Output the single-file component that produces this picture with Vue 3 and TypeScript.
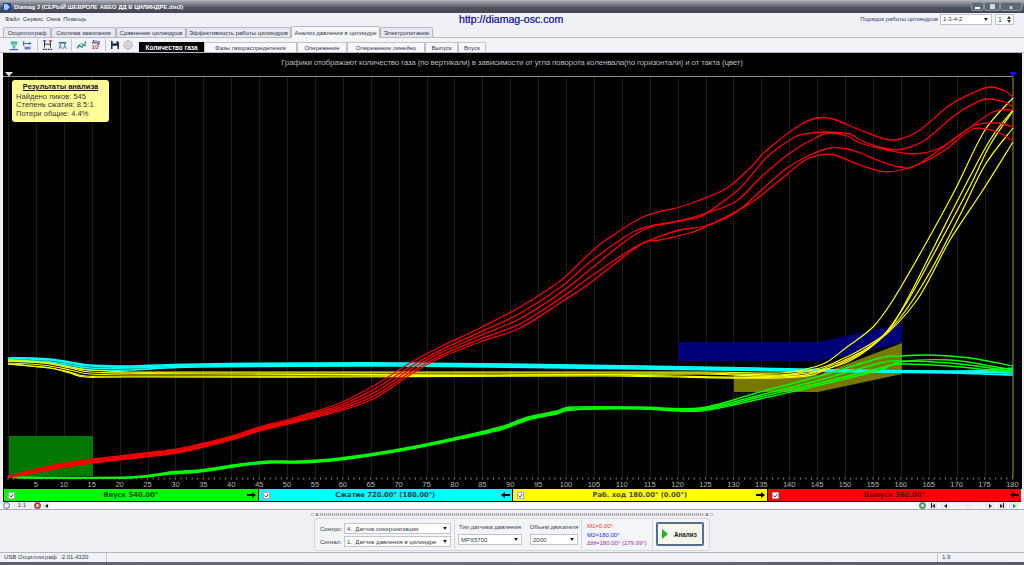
<template>
  <div class="window">
    <div class="titlebar">
      <svg class="app-icon" width="8" height="8" viewBox="0 0 8 8"><rect width="8" height="8" fill="#1b3fa8" /><path d="M1 1h3l3 3-3 3H1z" fill="#9fd0ff" /></svg>
      <span class="title-text">Diamag 2 (СЕРЫЙ ШЕВРОЛЕ АВЕО ДД В ЦИЛИНДРЕ.dm2)</span>
      <div class="win-btns">
        <span class="win-btn w-min"><i class="min-mark"></i></span>
        <span class="win-btn w-max"><i class="max-mark"></i></span>
        <span class="win-btn w-close">x</span>
      </div>
    </div>

    <div class="menubar">
      <div class="menu">
        <span v-for="m in menu" :key="m">{{ m }}</span>
      </div>
      <a class="url">http://diamag-osc.com</a>
      <div class="order">
        <span class="order-label">Порядок работы цилиндров</span>
        <div class="sel order-sel"><span>1-3-4-2</span><i class="caret"></i></div>
        <div class="spin"><span>1</span><span class="spin-arrows"><i class="up"></i><i class="down"></i></span></div>
      </div>
    </div>

    <div class="tabs">
      <div
        v-for="t in tabs"
        :key="t.label"
        class="tab"
        :class="{ active: t.active }"
        :style="{ width: t.width + 'px' }"
      >{{ t.label }}</div>
    </div>

    <div class="toolbar">
      <div class="tools">
        <svg class="tool" width="10" height="11" viewBox="0 0 12 12">
          <path d="M2 2h8M2 4h8" stroke="#18a8a0" stroke-width="1.4" />
          <path d="M3 6h6l-2 2v2H5V8z" fill="#2ec46a" />
          <path d="M1 11h10" stroke="#2340d0" stroke-width="1.2" />
        </svg>
        <svg class="tool" width="9" height="10" viewBox="0 0 12 12">
          <path d="M1 1v6" stroke="#124" stroke-width="1.2" />
          <path d="M2 4h7" stroke="#0a6a88" stroke-width="1.2" />
          <path d="M8 2l3 2-3 2z" fill="#0a6a88" />
          <path d="M2 9h8M2 11h8" stroke="#2340d0" stroke-width="1.2" />
        </svg>
        <i class="tool-sep"></i>
        <svg class="tool" width="11" height="11" viewBox="0 0 13 13">
          <path d="M3 1v8M10 1v8M3 5h7" stroke="#223" stroke-width="1.1" />
          <path d="M1 1h4" stroke="#1a3bd0" stroke-width="1.3" />
          <path d="M8 1h4" stroke="#d22" stroke-width="1.3" />
          <path d="M1 11h11" stroke="#335" stroke-width="1.6" stroke-dasharray="2 1" />
        </svg>
        <svg class="tool" width="9" height="10" viewBox="0 0 12 12">
          <path d="M1 2h10v2H1z" fill="#117a7a" />
          <path d="M3 4v3M9 4v3" stroke="#234" />
          <path d="M1 11l2-4 2 4M7 11l2-4 2 4" fill="none" stroke="#2340d0" />
        </svg>
        <i class="tool-sep"></i>
        <svg class="tool" width="11" height="10" viewBox="0 0 13 12">
          <path d="M1 10l3-4 3 3 5-7" fill="none" stroke="#109040" stroke-width="1.3" />
          <path d="M2 7l2 1M6 4l2 2M10 7l2-1" stroke="#2340d0" stroke-width="1.2" />
        </svg>
        <span class="tool alg"><b>Alg</b><b class="alg-sub">1/2</b></span>
        <i class="tool-sep"></i>
        <svg class="tool" width="8" height="8" viewBox="0 0 10 10">
          <path d="M0 0h8l2 2v8H0z" fill="#1c2c44" />
          <path d="M2 0h5v3H2z" fill="#dfe4ee" />
          <path d="M2 6h6v4H2z" fill="#fff" />
        </svg>
        <svg class="tool" width="10" height="10" viewBox="0 0 12 12">
          <circle cx="6" cy="6" r="4.6" fill="none" stroke="#b4b4b4" stroke-width="1.4" />
          <path d="M6 0v12M0 6h12M2 2l8 8M10 2l-8 8" stroke="#b4b4b4" stroke-width=".8" />
          <circle cx="6" cy="6" r="1.6" fill="#e8e8ee" stroke="#aaa" stroke-width=".6" />
        </svg>
      </div>
      <div class="subtabs">
        <div
          v-for="s in subtabs"
          :key="s.label"
          class="subtab"
          :class="{ current: s.current }"
          :style="{ width: s.width + 'px' }"
        >{{ s.label }}</div>
      </div>
    </div>

    <div class="plot">
      <svg class="plot-svg" width="1019" height="436" viewBox="3 53 1019 436">
        <line v-for="g in grid" :key="'g' + g" :x1="g" :x2="g" y1="77" y2="478" stroke="#1d1d1d" />
        <line x1="3" x2="1013" y1="76.5" y2="76.5" stroke="#8e8e8e" />
        <line x1="1013" x2="1013" y1="77" y2="478" stroke="#8a8a12" />
        <polygon points="5,72 13,72 9,76.5" fill="#e2e2e2" />
        <polygon points="1009,72 1017,72 1013,76.5" fill="#1010f0" />

        <rect x="9" y="436" width="84" height="40" fill="#007800" />
        <polygon points="678,342 818,342 902,324 902,343 818,361 678,361" fill="#000078" />
        <polygon points="734,374 818,375 902,343 902,374 818,392 734,392" fill="#787800" />

        <path v-for="(d, i) in cyanPaths" :key="'c' + i" :d="d" class="curve wide-curve" stroke="#00ffff" />
        <path v-for="(d, i) in greenPaths" :key="'n' + i" :d="d" class="curve green-curve" stroke="#00ff00" />
        <path v-for="(d, i) in yellowPaths" :key="'y' + i" :d="d" class="curve yellow-curve" stroke="#ffff00" />
        <path v-for="(d, i) in redPaths" :key="'r' + i" :d="d" class="curve" stroke="#ff0000" />

        <line v-for="t in ticks" :key="'t' + t" :x1="t" :x2="t" y1="477.5" y2="479.5" stroke="#8a8a8a" />
        <text
          v-for="l in labels"
          :key="'l' + l.deg"
          :x="l.x"
          y="487"
          class="axis-label"
        >{{ l.deg }}</text>
      </svg>
      <div class="plot-title">Графики отображают количество газа (по вертикали) в зависимости от угла поворота коленвала(по горизонтали) и от такта (цвет)</div>
      <div class="result">
        <div class="result-head">Результаты анализа</div>
        <div>Найдено пиков: 545</div>
        <div>Степень сжатия: 8.5:1</div>
        <div>Потери общие: 4.4%</div>
      </div>
    </div>

    <div class="bands">
      <div v-for="b in bands" :key="b.label" class="band" :class="b.cls">
        <span class="check"><svg width="5" height="5" viewBox="0 0 5 5"><path d="M.5 2.5l1.5 1.5L4.5 1" fill="none" stroke="#445" /></svg></span>
        <span class="band-label">{{ b.label }}</span>
        <svg class="arrow" width="9" height="6" viewBox="0 0 9 6">
          <path v-if="b.dir === 'right'" d="M0 2h5V0l4 3-4 3V4H0z" fill="#000" />
          <path v-else d="M9 2H4V0L0 3l4 3V4h5z" fill="#000" />
        </svg>
      </div>
    </div>

    <div class="zoomrow">
      <div class="zoom-left">
        <span class="round minus"></span>
        <span class="ratio">1:1</span>
        <span class="round plus"></span>
        <span class="nav-btn small"><i class="tri-l"></i></span>
      </div>
      <div class="zoom-right">
        <span class="round go"></span>
        <span class="nav-btn"><i class="bar"></i><i class="tri-l"></i></span>
        <span class="nav-btn"><i class="tri-l"></i></span>
        <span class="dots">...</span>
        <span class="nav-btn"><i class="tri-r"></i></span>
        <span class="nav-btn"><i class="tri-r"></i><i class="bar"></i></span>
        <span class="nav-btn"><i class="tri-r green"></i></span>
      </div>
    </div>

    <div class="controls">
      <div class="slider"><i class="tri-d"></i><i class="slider-dots"></i><i class="tri-d"></i></div>
      <div class="box">
        <div class="group sync">
          <div class="sync-row">
            <span class="lbl">Синхро:</span>
            <div class="sel wide"><span>4.&nbsp; Датчик синхронизации</span><i class="caret"></i></div>
          </div>
          <div class="sync-row">
            <span class="lbl">Сигнал:</span>
            <div class="sel wide"><span>1.&nbsp; Датчик давления в цилиндре</span><i class="caret"></i></div>
          </div>
        </div>
        <div class="group sensors">
          <div class="field f-type">
            <span class="lbl">Тип датчика давления</span>
            <div class="sel"><span>MPX5700</span><i class="caret"></i></div>
          </div>
          <div class="field f-vol">
            <span class="lbl">Объем двигателя</span>
            <div class="sel"><span>2000</span><i class="caret"></i></div>
          </div>
        </div>
        <div class="group marks">
          <span class="m1">M1=0.00°</span>
          <span class="m2">M2=180.00°</span>
          <span class="dm">ΔM=180.00° (179.99°)</span>
        </div>
        <div class="group run">
          <button class="analyze"><i class="play"></i><span>Анализ</span></button>
        </div>
      </div>
    </div>

    <div class="status">
      <span class="st-a">USB Осциллограф&nbsp;&nbsp;&nbsp;2.01.4320</span>
      <span class="st-b"></span>
      <span class="st-c">1.9</span>
    </div>
    <div class="taskstrip"></div>
  </div>
</template>

<script setup lang="ts">
type Pt = [number, number]

const menu = ['Файл', 'Сервис', 'Окна', 'Помощь']

const tabs = [
  { label: 'Осциллограф', width: 48 },
  { label: 'Система зажигания', width: 65 },
  { label: 'Сравнение цилиндров', width: 70 },
  { label: 'Эффективность работы цилиндров', width: 105 },
  { label: 'Анализ давления в цилиндре', width: 89, active: true },
  { label: 'Электропитание', width: 53 },
]

const subtabs = [
  { label: 'Количество газа', width: 65, current: true },
  { label: 'Фазы газораспределения', width: 93 },
  { label: 'Опережение', width: 50 },
  { label: 'Опережение линейно', width: 78 },
  { label: 'Выпуск', width: 33 },
  { label: 'Впуск', width: 28 },
]

const bands = [
  { label: 'Впуск 540.00°', cls: 'b-green', dir: 'right' },
  { label: 'Сжатие 720.00° (180.00°)', cls: 'b-cyan', dir: 'left' },
  { label: 'Раб. ход 180.00° (0.00°)', cls: 'b-yellow', dir: 'right' },
  { label: 'Выпуск 360.00°', cls: 'b-red', dir: 'left' },
]

const degX = (deg: number) => 8 + deg * 5.58

const grid = Array.from({ length: 37 }, (_, i) => Math.round(degX(i * 5)) + 0.5)
const ticks = Array.from({ length: 181 }, (_, i) => degX(i))
const labels = Array.from({ length: 36 }, (_, i) => ({ deg: (i + 1) * 5, x: degX((i + 1) * 5) }))

// catmull-rom through the points, curves look like the scope's smoothed traces
function smooth(p: Pt[]): string {
  let d = `M${p[0][0]} ${p[0][1]}`
  for (let i = 0; i < p.length - 1; i++) {
    const p0 = p[i - 1] || p[i]
    const p1 = p[i]
    const p2 = p[i + 1]
    const p3 = p[i + 2] || p2
    const c1x = p1[0] + (p2[0] - p0[0]) / 6
    const c1y = p1[1] + (p2[1] - p0[1]) / 6
    const c2x = p2[0] - (p3[0] - p1[0]) / 6
    const c2y = p2[1] - (p3[1] - p1[1]) / 6
    d += `C${c1x.toFixed(1)} ${c1y.toFixed(1)} ${c2x.toFixed(1)} ${c2y.toFixed(1)} ${p2[0]} ${p2[1]}`
  }
  return d
}

// the early part of a family runs as a tight bundle, so it is interpolated
function bundle(xs: number[], hi: number[], lo: number[], t: number): Pt[] {
  return xs.map((x, i) => [x, +(hi[i] + (lo[i] - hi[i]) * t).toFixed(1)] as Pt)
}

const redX = [8, 60, 93, 170, 200, 235, 256, 300, 340, 375, 410, 440, 480, 520, 560, 590]
const redHi = [476, 464, 459, 450, 444, 435, 428, 416, 403, 385, 363, 347, 328, 307, 281, 253]
const redLo = [478, 468, 463, 454, 448, 439, 432, 421, 411, 398, 375, 358, 342, 328, 303, 283]

const redTails: { t: number; pts: Pt[] }[] = [
  {
    t: 0,
    pts: [[606, 240], [643, 217], [680, 207], [700, 200], [727, 188], [750, 168], [767, 150], [800, 125], [817, 118], [833, 119], [860, 130], [885, 139], [900, 139], [920, 130], [950, 105], [975, 92], [990, 87], [1005, 91], [1013, 97]],
  },
  {
    t: 0.3,
    pts: [[620, 240], [635, 231], [655, 225], [690, 219], [705, 214], [740, 188], [767, 157], [793, 138], [805, 134], [825, 132], [850, 134], [860, 140], [883, 148], [903, 149], [925, 140], [955, 115], [975, 103], [987, 99], [1005, 102], [1013, 107]],
  },
  {
    t: 0.55,
    pts: [[627, 240], [650, 227], [670, 223], [700, 215], [735, 202], [760, 178], [790, 153], [817, 137], [830, 133], [847, 136], [860, 143], [887, 150], [913, 154], [940, 148], [973, 126], [997, 123], [1013, 127]],
  },
  {
    t: 0.8,
    pts: [[630, 250], [650, 240], [680, 230], [705, 226], [735, 213], [767, 185], [787, 168], [810, 155], [830, 148], [847, 149], [860, 153], [880, 161], [900, 167], [917, 165], [957, 137], [993, 112], [1013, 110]],
  },
  {
    t: 1,
    pts: [[640, 245], [660, 240], [690, 233], [705, 227], [735, 212], [755, 200], [780, 180], [805, 160], [820, 155], [835, 155], [860, 165], [887, 172], [917, 165], [945, 150], [973, 129], [997, 132], [1013, 141]],
  },
]

const redPaths = redTails.map(c => {
  const head = bundle(redX, redHi, redLo, c.t).filter(p => p[0] < c.pts[0][0] - 10)
  return smooth([...head, ...c.pts])
})

const yellowPaths = [
  [[8, 360], [30, 361], [50, 363], [70, 367], [90, 370], [130, 372], [200, 372], [500, 372], [700, 372], [780, 373], [810, 368], [827, 362], [847, 347], [873, 327], [893, 300], [925, 245], [955, 190], [985, 130], [1013, 98]],
  [[8, 361], [30, 362], [50, 364], [70, 368], [90, 372], [130, 373], [200, 373], [500, 373], [700, 373], [780, 375], [820, 368], [840, 360], [860, 350], [887, 332], [907, 300], [935, 245], [963, 190], [990, 140], [1013, 110]],
  [[8, 363], [30, 364], [50, 366], [70, 370], [90, 374], [130, 374], [200, 374], [500, 375], [700, 374], [780, 376], [840, 365], [877, 342], [902, 310], [925, 270], [968, 190], [990, 145], [1013, 111]],
  [[8, 364], [30, 366], [50, 368], [70, 372], [85, 376], [130, 376], [340, 376], [600, 375], [780, 377], [830, 366], [872, 345], [900, 318], [930, 272], [960, 215], [985, 165], [1013, 128]],
  [[8, 364], [30, 366], [50, 368], [70, 373], [85, 377], [130, 377], [340, 377], [600, 376], [780, 378], [830, 368], [877, 342], [917, 300], [950, 240], [983, 190], [1013, 142]],
].map(p => smooth(p as Pt[]))

const cyanPaths = [
  [[8, 358], [30, 358], [50, 359], [70, 362], [90, 365], [130, 366], [200, 364], [400, 363], [640, 366], [800, 369], [950, 372], [1013, 368]],
  [[8, 359], [30, 359], [50, 360], [70, 363], [90, 366], [130, 367], [200, 365], [400, 364], [640, 367], [800, 370], [950, 371], [1013, 371]],
  [[8, 360], [30, 361], [50, 362], [70, 365], [90, 368], [130, 368], [200, 366], [400, 365], [640, 368], [800, 371], [950, 372], [1013, 373]],
  [[8, 361], [30, 362], [50, 363], [70, 367], [90, 370], [130, 370], [200, 367], [400, 366], [640, 369], [800, 371], [950, 373], [1013, 375]],
].map(p => smooth(p as Pt[]))

const greenX = [8, 25, 130, 170, 200, 240, 270, 300, 340, 400, 450, 500, 528, 557, 573, 640]
const greenHi = [476, 477, 477, 472, 470, 464, 461, 461, 458, 449, 439, 427, 417, 411, 407, 407]
const greenLo = [477, 478, 478, 474, 472, 466, 463, 463, 460, 451, 441, 430, 420, 414, 410, 409]

const greenPaths = [
  { t: 0, pts: [[700, 408], [760, 392], [820, 376], [880, 358], [900, 356], [930, 355], [970, 358], [1013, 366]] },
  { t: 0.35, pts: [[700, 409], [760, 395], [820, 380], [880, 363], [900, 361], [950, 363], [990, 368], [1013, 372]] },
  { t: 0.7, pts: [[700, 410], [760, 397], [820, 383], [880, 368], [900, 364], [950, 366], [1000, 371], [1013, 369]] },
  { t: 1, pts: [[700, 411], [760, 399], [820, 385], [880, 370], [900, 362], [950, 360], [990, 366], [1013, 370]] },
].map(c => smooth([...bundle(greenX, greenHi, greenLo, c.t), ...(c.pts as Pt[])]))
</script>

<style>
html,
body {
  margin: 0;
  height: 565px;
  overflow: hidden;
  background: #f0f1f6;
}
</style>

<style scoped>
.window {
  width: 1024px;
  height: 565px;
  display: flex;
  flex-direction: column;
  background: #f0f1f6;
  font-family: 'Liberation Sans', Arial, sans-serif;
  font-size: 6px;
  color: #33384a;
  overflow: hidden;
}

.titlebar {
  height: 13px;
  flex: none;
  display: flex;
  align-items: center;
  padding: 0 2px 0 3px;
  box-sizing: border-box;
  background: linear-gradient(#b5b7bf 0, #8b8d97 3px, #4e505a 8px, #43454f 100%);
  color: #fff;
}
.app-icon {
  margin-right: 3px;
}
.title-text {
  font-weight: bold;
  font-size: 5.9px;
}
.win-btns {
  margin-left: auto;
  display: flex;
  align-self: flex-start;
  padding-top: 2px;
}
.win-btn {
  height: 7px;
  display: flex;
  align-items: center;
  justify-content: center;
  background: #5d6a70;
  border: 1px solid #8a949a;
  border-radius: 2px;
  color: #fff;
  font-size: 6px;
  font-weight: bold;
}
.w-min {
  width: 11px;
}
.w-max {
  width: 14px;
}
.w-close {
  width: 20px;
}
.min-mark {
  width: 5px;
  height: 2px;
  margin-top: 3px;
  background: #fff;
}
.max-mark {
  width: 5px;
  height: 5px;
  background: #d5dadd;
}

.menubar {
  height: 12px;
  flex: none;
  display: flex;
  align-items: center;
  position: relative;
  padding: 0 10px 0 5px;
}
.menu {
  display: flex;
  gap: 3px;
  width: 454px;
}
.url {
  color: #2b2fa0;
  font-size: 10.6px;
  font-weight: 500;
  width: 104px;
  white-space: nowrap;
  text-shadow: 0 0 0.4px #2b2fa0;
}
.order {
  margin-left: auto;
  display: flex;
  align-items: center;
  gap: 2px;
}
.order-label {
  color: #2b3a80;
  white-space: nowrap;
}
.order-sel {
  width: 52px;
}
.spin {
  width: 19px;
  height: 11px;
  margin-left: 1px;
  background: #fff;
  border: 1px solid #c5c5cc;
  box-sizing: border-box;
  display: flex;
  align-items: center;
  justify-content: space-between;
  padding: 0 2px;
  font-size: 7px;
}
.spin-arrows {
  display: flex;
  flex-direction: column;
  gap: 1px;
}
.up,
.down {
  width: 0;
  height: 0;
  border-left: 2px solid transparent;
  border-right: 2px solid transparent;
}
.up {
  border-bottom: 3px solid #333;
}
.down {
  border-top: 3px solid #333;
}

.sel {
  height: 11px;
  background: #fff;
  border: 1px solid #c2c3cb;
  box-sizing: border-box;
  display: flex;
  align-items: center;
  justify-content: space-between;
  padding: 0 3px 0 2px;
  color: #333845;
  white-space: nowrap;
  overflow: hidden;
}
.caret {
  flex: none;
  width: 0;
  height: 0;
  border-left: 2.5px solid transparent;
  border-right: 2.5px solid transparent;
  border-top: 3px solid #222;
}

.tabs {
  height: 13px;
  flex: none;
  display: flex;
  align-items: flex-end;
  padding-left: 3px;
  box-sizing: border-box;
  border-bottom: 1px solid #b9bac2;
}
.tab {
  height: 10px;
  box-sizing: border-box;
  background: #e6e7ee;
  border: 1px solid #b6b7c0;
  border-bottom: 0;
  border-radius: 2px 2px 0 0;
  display: flex;
  align-items: center;
  justify-content: center;
  white-space: nowrap;
  overflow: hidden;
}
.tab.active {
  height: 12px;
  background: #f6f6fa;
  margin-bottom: -1px;
}

.toolbar {
  height: 15px;
  flex: none;
  display: flex;
  align-items: flex-end;
  background: #f2f3f8;
  border-bottom: 1px solid #b9bac2;
  box-sizing: border-box;
  padding: 0 0 0 3px;
}
.tools {
  width: 136px;
  height: 14px;
  display: flex;
  align-items: center;
  padding-left: 6px;
  box-sizing: border-box;
  gap: 4.4px;
}
.tool {
  flex: none;
}
.tool-sep {
  width: 1px;
  height: 12px;
  background: #c5c6ce;
  flex: none;
}
.alg {
  width: 9px;
  display: flex;
  flex-direction: column;
  font-size: 5px;
  line-height: 5px;
  color: #1b2b70;
}
.alg-sub {
  color: #c03030;
}
.subtabs {
  display: flex;
  align-items: flex-end;
  height: 10px;
}
.subtab {
  height: 10px;
  box-sizing: border-box;
  background: #f8f8fb;
  border: 1px solid #c0c1c9;
  border-bottom: 0;
  display: flex;
  align-items: center;
  justify-content: center;
  white-space: nowrap;
  overflow: hidden;
}
.subtab.current {
  background: #000;
  border-color: #000;
  color: #fff;
  font-weight: bold;
  font-size: 6.4px;
}

.plot {
  position: relative;
  height: 436px;
  flex: none;
  margin: 0 2px 0 3px;
  background: #000;
}
.plot-svg {
  display: block;
}
.curve {
  fill: none;
  stroke-width: 1.3;
}
.wide-curve {
  stroke-width: 1.7;
}
.yellow-curve {
  stroke-width: 1.2;
}
.green-curve {
  stroke-width: 1.4;
}
.axis-label {
  fill: #b4b4b4;
  font-size: 7.5px;
  text-anchor: middle;
}
.plot-title {
  position: absolute;
  left: 0;
  right: 1px;
  top: 5px;
  text-align: center;
  color: #b9b9b9;
  font-size: 8px;
  white-space: nowrap;
  letter-spacing: -0.185px;
}
.result {
  position: absolute;
  left: 9px;
  top: 27px;
  width: 97px;
  height: 42px;
  box-sizing: border-box;
  padding: 3px 4px;
  background: #ffff99;
  border-radius: 3px;
  color: #333;
  font-size: 7.6px;
  line-height: 8.7px;
}
.result-head {
  text-align: center;
  font-weight: bold;
  text-decoration: underline;
  color: #111;
  margin-bottom: 1px;
  font-size: 7.5px;
}

.bands {
  height: 13px;
  flex: none;
  display: flex;
  gap: 1px;
  background: #000;
  margin: 0 1px 0 3px;
  padding: 0 0 1px 1px;
  box-sizing: border-box;
  width: 1018px;
}
.band {
  flex: 1;
  min-width: 0;
  display: flex;
  align-items: center;
  padding: 0 2px 0 4px;
  font-family: 'DejaVu Sans', sans-serif;
  font-weight: bold;
  font-size: 6.8px;
}
.b-green {
  background: #00ff00;
  color: #064a06;
}
.b-cyan {
  background: #00ffff;
  color: #083c50;
}
.b-yellow {
  background: #ffff00;
  color: #4a4a06;
}
.b-red {
  background: #ff0000;
  color: #5a0808;
}
.check {
  width: 7px;
  height: 7px;
  flex: none;
  background: #fff;
  border: 1px solid #aaa;
  box-sizing: border-box;
  display: flex;
  align-items: center;
  justify-content: center;
}
.band-label {
  flex: 1;
  text-align: center;
  white-space: nowrap;
}
.arrow {
  flex: none;
}

.zoomrow {
  height: 8px;
  flex: none;
  display: flex;
  justify-content: space-between;
  align-items: center;
  background: #fafafd;
  border-bottom: 1px solid #a9aab2;
  box-sizing: border-box;
  padding: 0 5px 0 3px;
}
.zoom-left,
.zoom-right {
  display: flex;
  align-items: center;
  gap: 2px;
}
.round {
  width: 7px;
  height: 7px;
  border-radius: 50%;
  box-sizing: border-box;
  background: #e8e9f0;
  flex: none;
}
.minus {
  border: 1px solid #5a6a90;
}
.plus {
  border: 2px solid #c04040;
}
.go {
  border: 2px solid #4a9a5a;
}
.ratio {
  width: 20px;
  height: 7px;
  background: #eceded;
  line-height: 7px;
  text-align: center;
  color: #444;
}
.nav-btn {
  width: 10px;
  height: 7px;
  display: flex;
  align-items: center;
  justify-content: center;
  background: #e9eaf0;
}
.nav-btn.small {
  width: 6px;
}
.tri-l,
.tri-r {
  width: 0;
  height: 0;
  border-top: 2.5px solid transparent;
  border-bottom: 2.5px solid transparent;
}
.tri-l {
  border-right: 3px solid #222;
}
.tri-r {
  border-left: 3px solid #222;
}
.tri-r.green {
  border-left-color: #0a9a1a;
}
.bar {
  width: 1px;
  height: 5px;
  background: #222;
}
.dots {
  width: 31px;
  height: 7px;
  line-height: 5px;
  text-align: center;
  background: #f2f2f6;
  color: #666;
}

.controls {
  height: 43px;
  flex: none;
  display: flex;
  flex-direction: column;
  align-items: center;
  padding-top: 3px;
  box-sizing: border-box;
  border-bottom: 1px solid #b4b5bd;
}
.slider {
  width: 402px;
  height: 3px;
  box-sizing: border-box;
  border: 1px solid #c6c7ce;
  background: #fff;
  display: flex;
  align-items: center;
  justify-content: space-between;
  padding: 0 4px;
  margin-bottom: 2px;
}
.slider-dots {
  flex: 1;
  height: 1px;
  margin: 0 2px;
  background: repeating-linear-gradient(90deg, #888 0 1px, transparent 1px 2px);
}
.tri-d {
  width: 0;
  height: 0;
  border-left: 1.5px solid transparent;
  border-right: 1.5px solid transparent;
  border-top: 2px solid #333;
}
.box {
  width: 396px;
  height: 33px;
  box-sizing: border-box;
  display: flex;
  border: 1px solid #d4d5dc;
  border-radius: 3px;
  background: #f3f4f8;
}
.group {
  box-sizing: border-box;
  border-right: 1px solid #d4d5dc;
  height: 29px;
  margin-top: 1px;
}
.sync {
  width: 140px;
  padding: 3px 3px 0 5px;
  display: flex;
  flex-direction: column;
  gap: 2px;
}
.sync-row {
  display: flex;
  align-items: center;
  justify-content: space-between;
  color: #444;
}
.lbl {
  white-space: nowrap;
  color: #3c4150;
}
.wide {
  width: 107px;
}
.sensors {
  width: 127px;
  display: flex;
  gap: 8px;
  padding: 3px 0 0 3px;
}
.field {
  display: flex;
  flex-direction: column;
  align-items: center;
  gap: 3px;
  line-height: 8px;
}
.f-type {
  width: 64px;
}
.f-vol {
  width: 48px;
}
.field .sel {
  width: 100%;
}
.marks {
  width: 71px;
  padding: 2px 0 0 5px;
  display: flex;
  flex-direction: column;
  line-height: 8.5px;
  white-space: nowrap;
}
.m1 {
  color: #f03030;
}
.m2 {
  color: #2a2af0;
}
.dm {
  color: #a030a0;
}
.run {
  border-right: 0;
  flex: 1;
  padding: 2px 0 0 3px;
}
.analyze {
  width: 48px;
  height: 24px;
  box-sizing: border-box;
  border: 2px solid #51708c;
  border-radius: 2px;
  background: #f5f5ec;
  display: flex;
  align-items: center;
  padding: 0 0 0 4px;
  gap: 6px;
  font-family: inherit;
  font-weight: bold;
  font-size: 6.3px;
  color: #222;
}
.play {
  flex: none;
  width: 0;
  height: 0;
  border-top: 5px solid transparent;
  border-bottom: 5px solid transparent;
  border-left: 6px solid #16b820;
}

.status {
  height: 9px;
  flex: none;
  display: flex;
  padding: 0 2px 0 3px;
  box-sizing: border-box;
  line-height: 9px;
  background: #f0f1f6;
}
.st-a {
  width: 102px;
  padding-left: 1px;
  border-right: 1px solid #c3c4cc;
  white-space: nowrap;
}
.st-b {
  width: 830px;
  border-right: 1px solid #c3c4cc;
}
.st-c {
  padding-left: 4px;
}
.taskstrip {
  flex: 1;
  background: linear-gradient(90deg, #5c6068, #6a6e78 40%, #585b63);
}
</style>
